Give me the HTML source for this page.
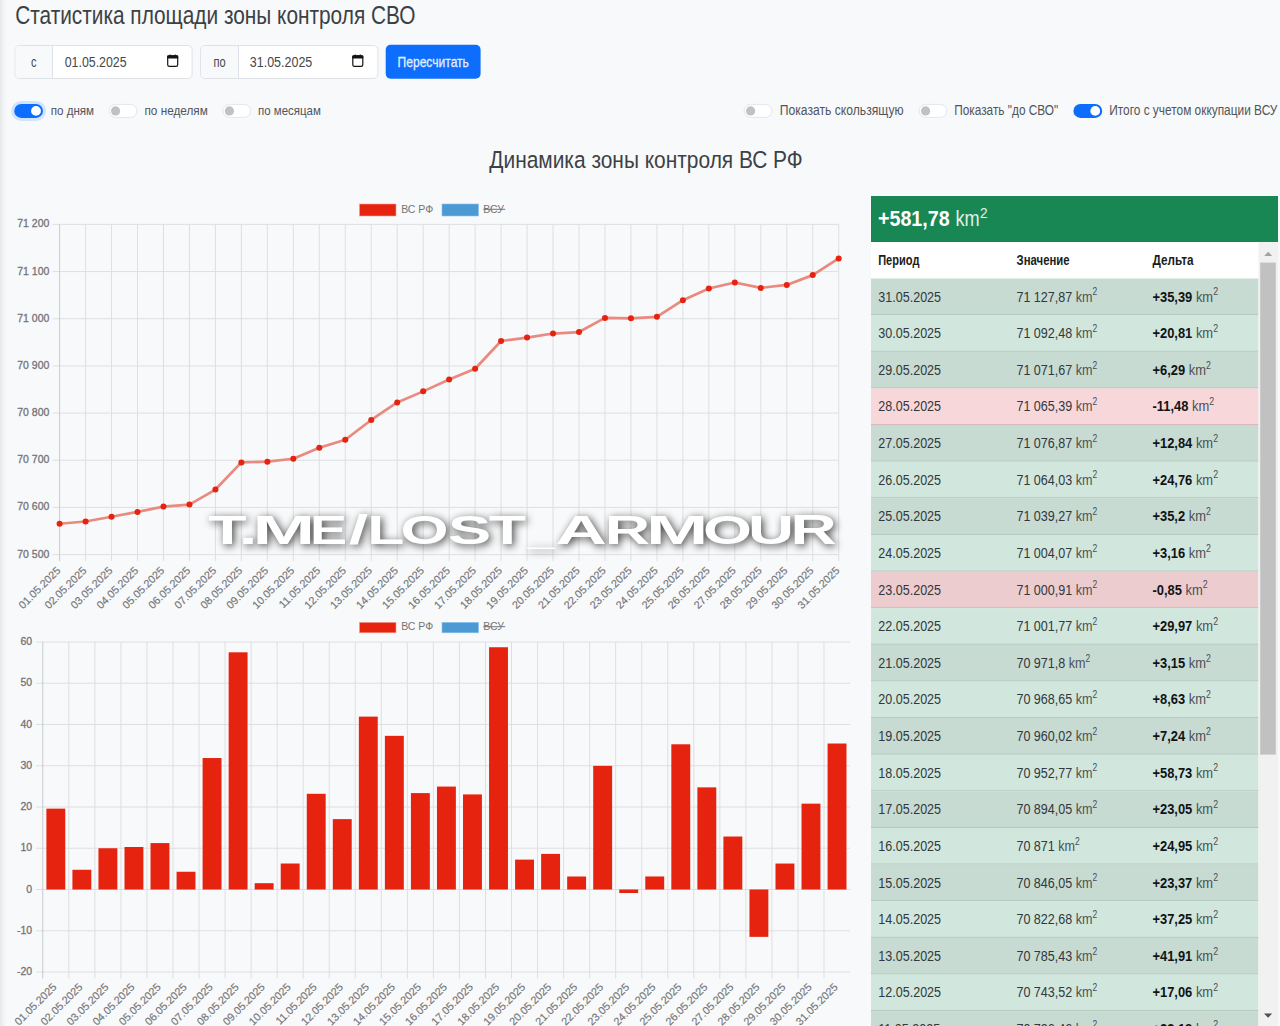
<!DOCTYPE html>
<html lang="ru"><head><meta charset="utf-8"><title>Статистика площади зоны контроля СВО</title>
<style>
html,body{margin:0;padding:0;background:#f8f9fa;}
body{width:1280px;height:1026px;overflow:hidden;font-family:"Liberation Sans", sans-serif;}
svg{display:block;font-family:"Liberation Sans", sans-serif;}
</style></head>
<body>
<svg width="1280" height="1026" viewBox="0 0 1280 1026">
<rect x="0.00" y="0.00" width="1280.00" height="1026.00" fill="#f8f9fa" />
<defs><linearGradient id="lstrip" x1="0" x2="1" y1="0" y2="0"><stop offset="0" stop-color="#e6e8ea"/><stop offset="1" stop-color="#f8f9fa" stop-opacity="0"/></linearGradient></defs>
<rect x="0.00" y="0.00" width="9.00" height="1026.00" fill="url(#lstrip)" />
<text x="15.20" y="23.75" font-size="25" fill="#3c4146" font-weight="normal" textLength="400.20" lengthAdjust="spacingAndGlyphs" >Статистика площади зоны контроля СВО</text>
<rect x="15.10" y="45.50" width="177.00" height="33.00" rx="4.5" fill="#ffffff" stroke="#dee2e6" stroke-width="1"/>
<path d="M52.50,46.00 L19.60,46.00 Q15.60,46.00 15.60,50.00 L15.60,74.00 Q15.60,78.00 19.60,78.00 L52.50,78.00 Z" fill="#f8f9fa"/>
<line x1="52.50" y1="45.50" x2="52.50" y2="78.50" stroke="#dee2e6" stroke-width="1" />
<text x="31.00" y="66.80" font-size="14" fill="#464b50" font-weight="normal" textLength="5.60" lengthAdjust="spacingAndGlyphs" >с</text>
<text x="64.70" y="66.80" font-size="15" fill="#43484d" font-weight="normal" textLength="61.90" lengthAdjust="spacingAndGlyphs" >01.05.2025</text>
<rect x="167.70" y="55.80" width="10.0" height="10.6" rx="1.7" fill="none" stroke="#141414" stroke-width="1.2"/><rect x="167.10" y="55.20" width="11.2" height="3.4" rx="1.2" fill="#141414"/><rect x="169.50" y="54.60" width="1.3" height="1.4" fill="#141414"/><rect x="174.60" y="54.60" width="1.3" height="1.4" fill="#141414"/>
<rect x="200.60" y="45.50" width="177.30" height="33.00" rx="4.5" fill="#ffffff" stroke="#dee2e6" stroke-width="1"/>
<path d="M238.50,46.00 L205.10,46.00 Q201.10,46.00 201.10,50.00 L201.10,74.00 Q201.10,78.00 205.10,78.00 L238.50,78.00 Z" fill="#f8f9fa"/>
<line x1="238.50" y1="45.50" x2="238.50" y2="78.50" stroke="#dee2e6" stroke-width="1" />
<text x="213.40" y="66.80" font-size="14" fill="#464b50" font-weight="normal" textLength="12.20" lengthAdjust="spacingAndGlyphs" >по</text>
<text x="249.80" y="66.80" font-size="15" fill="#43484d" font-weight="normal" textLength="62.50" lengthAdjust="spacingAndGlyphs" >31.05.2025</text>
<rect x="352.80" y="55.80" width="10.0" height="10.6" rx="1.7" fill="none" stroke="#141414" stroke-width="1.2"/><rect x="352.20" y="55.20" width="11.2" height="3.4" rx="1.2" fill="#141414"/><rect x="354.60" y="54.60" width="1.3" height="1.4" fill="#141414"/><rect x="359.70" y="54.60" width="1.3" height="1.4" fill="#141414"/>
<rect x="385.7" y="44.8" width="94.9" height="34" rx="5" fill="#0d6efd"/>
<text x="397.60" y="66.70" font-size="14.8" fill="#e4eeff" font-weight="normal" textLength="71.30" lengthAdjust="spacingAndGlyphs" stroke="#e4eeff" stroke-width="0.3">Пересчитать</text>
<rect x="11.20" y="100.90" width="34.80" height="20.00" rx="10.00" fill="#c4dcff" opacity="0.75"/>
<rect x="14.20" y="103.90" width="28.80" height="14.00" rx="7.00" fill="#0d6efd"/>
<circle cx="36.00" cy="110.90" r="4.9" fill="#ffffff"/>
<text x="50.70" y="114.60" font-size="13.3" fill="#50555a" font-weight="normal" textLength="43.40" lengthAdjust="spacingAndGlyphs" >по дням</text>
<rect x="109.10" y="104.40" width="27.80" height="13.00" rx="6.50" fill="#ffffff" stroke="#e3e6e9" stroke-width="1"/>
<circle cx="115.60" cy="110.90" r="4.6" fill="#c0c1c2"/>
<text x="144.50" y="114.60" font-size="13.3" fill="#50555a" font-weight="normal" textLength="63.30" lengthAdjust="spacingAndGlyphs" >по неделям</text>
<rect x="222.90" y="104.40" width="27.80" height="13.00" rx="6.50" fill="#ffffff" stroke="#e3e6e9" stroke-width="1"/>
<circle cx="229.40" cy="110.90" r="4.6" fill="#c0c1c2"/>
<text x="258.00" y="114.60" font-size="13.3" fill="#50555a" font-weight="normal" textLength="62.80" lengthAdjust="spacingAndGlyphs" >по месяцам</text>
<rect x="744.10" y="104.40" width="27.80" height="13.00" rx="6.50" fill="#ffffff" stroke="#e3e6e9" stroke-width="1"/>
<circle cx="750.60" cy="110.90" r="4.6" fill="#c0c1c2"/>
<text x="779.80" y="114.70" font-size="14" fill="#50555a" font-weight="normal" textLength="123.80" lengthAdjust="spacingAndGlyphs" >Показать скользящую</text>
<rect x="919.10" y="104.40" width="27.80" height="13.00" rx="6.50" fill="#ffffff" stroke="#e3e6e9" stroke-width="1"/>
<circle cx="925.60" cy="110.90" r="4.6" fill="#c0c1c2"/>
<text x="954.20" y="114.70" font-size="14" fill="#50555a" font-weight="normal" textLength="104.10" lengthAdjust="spacingAndGlyphs" >Показать "до СВО"</text>
<rect x="1073.40" y="103.90" width="28.80" height="14.00" rx="7.00" fill="#0d6efd"/>
<circle cx="1095.20" cy="110.90" r="4.9" fill="#ffffff"/>
<text x="1109.20" y="114.70" font-size="14" fill="#50555a" font-weight="normal" textLength="168.20" lengthAdjust="spacingAndGlyphs" >Итого с учетом оккупации ВСУ</text>
<text x="489.30" y="167.90" font-size="24.5" fill="#3c4146" font-weight="normal" textLength="313.40" lengthAdjust="spacingAndGlyphs" >Динамика зоны контроля ВС РФ</text>
<rect x="359.5" y="204.00" width="36.5" height="12.00" fill="#e5230f" stroke="#f0a090" stroke-width="0.6"/>
<text x="401.2" y="212.90" font-size="10.5" fill="#737578">ВС РФ</text>
<rect x="442" y="204.00" width="36.5" height="12.00" fill="#4c9ad3" stroke="#8cc0e8" stroke-width="0.6"/>
<text x="483.3" y="212.90" font-size="10.5" fill="#737578">ВСУ</text>
<line x1="483.30" y1="209.30" x2="505.20" y2="209.30" stroke="#737578" stroke-width="1" />
<line x1="52.50" y1="224.40" x2="838.70" y2="224.40" stroke="#dedfe1" stroke-width="1" />
<text x="49.4" y="227.40" text-anchor="end" font-size="10.5" fill="#737578" stroke="#737578" stroke-width="0.3">71 200</text>
<line x1="52.50" y1="271.57" x2="838.70" y2="271.57" stroke="#dedfe1" stroke-width="1" />
<text x="49.4" y="274.57" text-anchor="end" font-size="10.5" fill="#737578" stroke="#737578" stroke-width="0.3">71 100</text>
<line x1="52.50" y1="318.74" x2="838.70" y2="318.74" stroke="#dedfe1" stroke-width="1" />
<text x="49.4" y="321.74" text-anchor="end" font-size="10.5" fill="#737578" stroke="#737578" stroke-width="0.3">71 000</text>
<line x1="52.50" y1="365.91" x2="838.70" y2="365.91" stroke="#dedfe1" stroke-width="1" />
<text x="49.4" y="368.91" text-anchor="end" font-size="10.5" fill="#737578" stroke="#737578" stroke-width="0.3">70 900</text>
<line x1="52.50" y1="413.09" x2="838.70" y2="413.09" stroke="#dedfe1" stroke-width="1" />
<text x="49.4" y="416.09" text-anchor="end" font-size="10.5" fill="#737578" stroke="#737578" stroke-width="0.3">70 800</text>
<line x1="52.50" y1="460.26" x2="838.70" y2="460.26" stroke="#dedfe1" stroke-width="1" />
<text x="49.4" y="463.26" text-anchor="end" font-size="10.5" fill="#737578" stroke="#737578" stroke-width="0.3">70 700</text>
<line x1="52.50" y1="507.43" x2="838.70" y2="507.43" stroke="#dedfe1" stroke-width="1" />
<text x="49.4" y="510.43" text-anchor="end" font-size="10.5" fill="#737578" stroke="#737578" stroke-width="0.3">70 600</text>
<line x1="52.50" y1="554.60" x2="838.70" y2="554.60" stroke="#dedfe1" stroke-width="1" />
<text x="49.4" y="557.60" text-anchor="end" font-size="10.5" fill="#737578" stroke="#737578" stroke-width="0.3">70 500</text>
<line x1="59.60" y1="224.40" x2="59.60" y2="561.10" stroke="#c9cacc" stroke-width="1" />
<line x1="85.57" y1="224.40" x2="85.57" y2="561.10" stroke="#dedfe1" stroke-width="1" />
<line x1="111.54" y1="224.40" x2="111.54" y2="561.10" stroke="#dedfe1" stroke-width="1" />
<line x1="137.51" y1="224.40" x2="137.51" y2="561.10" stroke="#dedfe1" stroke-width="1" />
<line x1="163.48" y1="224.40" x2="163.48" y2="561.10" stroke="#dedfe1" stroke-width="1" />
<line x1="189.45" y1="224.40" x2="189.45" y2="561.10" stroke="#dedfe1" stroke-width="1" />
<line x1="215.42" y1="224.40" x2="215.42" y2="561.10" stroke="#dedfe1" stroke-width="1" />
<line x1="241.39" y1="224.40" x2="241.39" y2="561.10" stroke="#dedfe1" stroke-width="1" />
<line x1="267.36" y1="224.40" x2="267.36" y2="561.10" stroke="#dedfe1" stroke-width="1" />
<line x1="293.33" y1="224.40" x2="293.33" y2="561.10" stroke="#dedfe1" stroke-width="1" />
<line x1="319.30" y1="224.40" x2="319.30" y2="561.10" stroke="#dedfe1" stroke-width="1" />
<line x1="345.27" y1="224.40" x2="345.27" y2="561.10" stroke="#dedfe1" stroke-width="1" />
<line x1="371.24" y1="224.40" x2="371.24" y2="561.10" stroke="#dedfe1" stroke-width="1" />
<line x1="397.21" y1="224.40" x2="397.21" y2="561.10" stroke="#dedfe1" stroke-width="1" />
<line x1="423.18" y1="224.40" x2="423.18" y2="561.10" stroke="#dedfe1" stroke-width="1" />
<line x1="449.15" y1="224.40" x2="449.15" y2="561.10" stroke="#dedfe1" stroke-width="1" />
<line x1="475.12" y1="224.40" x2="475.12" y2="561.10" stroke="#dedfe1" stroke-width="1" />
<line x1="501.09" y1="224.40" x2="501.09" y2="561.10" stroke="#dedfe1" stroke-width="1" />
<line x1="527.06" y1="224.40" x2="527.06" y2="561.10" stroke="#dedfe1" stroke-width="1" />
<line x1="553.03" y1="224.40" x2="553.03" y2="561.10" stroke="#dedfe1" stroke-width="1" />
<line x1="579.00" y1="224.40" x2="579.00" y2="561.10" stroke="#dedfe1" stroke-width="1" />
<line x1="604.97" y1="224.40" x2="604.97" y2="561.10" stroke="#dedfe1" stroke-width="1" />
<line x1="630.94" y1="224.40" x2="630.94" y2="561.10" stroke="#dedfe1" stroke-width="1" />
<line x1="656.91" y1="224.40" x2="656.91" y2="561.10" stroke="#dedfe1" stroke-width="1" />
<line x1="682.88" y1="224.40" x2="682.88" y2="561.10" stroke="#dedfe1" stroke-width="1" />
<line x1="708.85" y1="224.40" x2="708.85" y2="561.10" stroke="#dedfe1" stroke-width="1" />
<line x1="734.82" y1="224.40" x2="734.82" y2="561.10" stroke="#dedfe1" stroke-width="1" />
<line x1="760.79" y1="224.40" x2="760.79" y2="561.10" stroke="#dedfe1" stroke-width="1" />
<line x1="786.76" y1="224.40" x2="786.76" y2="561.10" stroke="#dedfe1" stroke-width="1" />
<line x1="812.73" y1="224.40" x2="812.73" y2="561.10" stroke="#dedfe1" stroke-width="1" />
<line x1="838.70" y1="224.40" x2="838.70" y2="561.10" stroke="#dedfe1" stroke-width="1" />
<text transform="translate(61.20,571.20) rotate(-45)" text-anchor="end" font-size="10.8" fill="#737578" stroke="#737578" stroke-width="0.15">01.05.2025</text>
<text transform="translate(87.17,571.20) rotate(-45)" text-anchor="end" font-size="10.8" fill="#737578" stroke="#737578" stroke-width="0.15">02.05.2025</text>
<text transform="translate(113.14,571.20) rotate(-45)" text-anchor="end" font-size="10.8" fill="#737578" stroke="#737578" stroke-width="0.15">03.05.2025</text>
<text transform="translate(139.11,571.20) rotate(-45)" text-anchor="end" font-size="10.8" fill="#737578" stroke="#737578" stroke-width="0.15">04.05.2025</text>
<text transform="translate(165.08,571.20) rotate(-45)" text-anchor="end" font-size="10.8" fill="#737578" stroke="#737578" stroke-width="0.15">05.05.2025</text>
<text transform="translate(191.05,571.20) rotate(-45)" text-anchor="end" font-size="10.8" fill="#737578" stroke="#737578" stroke-width="0.15">06.05.2025</text>
<text transform="translate(217.02,571.20) rotate(-45)" text-anchor="end" font-size="10.8" fill="#737578" stroke="#737578" stroke-width="0.15">07.05.2025</text>
<text transform="translate(242.99,571.20) rotate(-45)" text-anchor="end" font-size="10.8" fill="#737578" stroke="#737578" stroke-width="0.15">08.05.2025</text>
<text transform="translate(268.96,571.20) rotate(-45)" text-anchor="end" font-size="10.8" fill="#737578" stroke="#737578" stroke-width="0.15">09.05.2025</text>
<text transform="translate(294.93,571.20) rotate(-45)" text-anchor="end" font-size="10.8" fill="#737578" stroke="#737578" stroke-width="0.15">10.05.2025</text>
<text transform="translate(320.90,571.20) rotate(-45)" text-anchor="end" font-size="10.8" fill="#737578" stroke="#737578" stroke-width="0.15">11.05.2025</text>
<text transform="translate(346.87,571.20) rotate(-45)" text-anchor="end" font-size="10.8" fill="#737578" stroke="#737578" stroke-width="0.15">12.05.2025</text>
<text transform="translate(372.84,571.20) rotate(-45)" text-anchor="end" font-size="10.8" fill="#737578" stroke="#737578" stroke-width="0.15">13.05.2025</text>
<text transform="translate(398.81,571.20) rotate(-45)" text-anchor="end" font-size="10.8" fill="#737578" stroke="#737578" stroke-width="0.15">14.05.2025</text>
<text transform="translate(424.78,571.20) rotate(-45)" text-anchor="end" font-size="10.8" fill="#737578" stroke="#737578" stroke-width="0.15">15.05.2025</text>
<text transform="translate(450.75,571.20) rotate(-45)" text-anchor="end" font-size="10.8" fill="#737578" stroke="#737578" stroke-width="0.15">16.05.2025</text>
<text transform="translate(476.72,571.20) rotate(-45)" text-anchor="end" font-size="10.8" fill="#737578" stroke="#737578" stroke-width="0.15">17.05.2025</text>
<text transform="translate(502.69,571.20) rotate(-45)" text-anchor="end" font-size="10.8" fill="#737578" stroke="#737578" stroke-width="0.15">18.05.2025</text>
<text transform="translate(528.66,571.20) rotate(-45)" text-anchor="end" font-size="10.8" fill="#737578" stroke="#737578" stroke-width="0.15">19.05.2025</text>
<text transform="translate(554.63,571.20) rotate(-45)" text-anchor="end" font-size="10.8" fill="#737578" stroke="#737578" stroke-width="0.15">20.05.2025</text>
<text transform="translate(580.60,571.20) rotate(-45)" text-anchor="end" font-size="10.8" fill="#737578" stroke="#737578" stroke-width="0.15">21.05.2025</text>
<text transform="translate(606.57,571.20) rotate(-45)" text-anchor="end" font-size="10.8" fill="#737578" stroke="#737578" stroke-width="0.15">22.05.2025</text>
<text transform="translate(632.54,571.20) rotate(-45)" text-anchor="end" font-size="10.8" fill="#737578" stroke="#737578" stroke-width="0.15">23.05.2025</text>
<text transform="translate(658.51,571.20) rotate(-45)" text-anchor="end" font-size="10.8" fill="#737578" stroke="#737578" stroke-width="0.15">24.05.2025</text>
<text transform="translate(684.48,571.20) rotate(-45)" text-anchor="end" font-size="10.8" fill="#737578" stroke="#737578" stroke-width="0.15">25.05.2025</text>
<text transform="translate(710.45,571.20) rotate(-45)" text-anchor="end" font-size="10.8" fill="#737578" stroke="#737578" stroke-width="0.15">26.05.2025</text>
<text transform="translate(736.42,571.20) rotate(-45)" text-anchor="end" font-size="10.8" fill="#737578" stroke="#737578" stroke-width="0.15">27.05.2025</text>
<text transform="translate(762.39,571.20) rotate(-45)" text-anchor="end" font-size="10.8" fill="#737578" stroke="#737578" stroke-width="0.15">28.05.2025</text>
<text transform="translate(788.36,571.20) rotate(-45)" text-anchor="end" font-size="10.8" fill="#737578" stroke="#737578" stroke-width="0.15">29.05.2025</text>
<text transform="translate(814.33,571.20) rotate(-45)" text-anchor="end" font-size="10.8" fill="#737578" stroke="#737578" stroke-width="0.15">30.05.2025</text>
<text transform="translate(840.30,571.20) rotate(-45)" text-anchor="end" font-size="10.8" fill="#737578" stroke="#737578" stroke-width="0.15">31.05.2025</text>
<polyline fill="none" stroke="#ea897f" stroke-width="2.7" stroke-linejoin="round" points="59.60,523.75 85.57,521.49 111.54,516.77 137.51,511.91 163.48,506.61 189.45,504.58 215.42,489.55 241.39,462.42 267.36,461.70 293.33,458.73 319.30,447.79 345.27,439.74 371.24,419.97 397.21,402.40 423.18,391.37 449.15,379.60 475.12,368.73 501.09,341.03 527.06,337.61 553.03,333.54 579.00,332.05 604.97,317.92 630.94,318.32 656.91,316.83 682.88,300.22 708.85,288.54 734.82,282.49 760.79,287.90 786.76,284.94 812.73,275.12 838.70,258.42"/>
<circle cx="59.60" cy="523.75" r="3" fill="#e5230f"/>
<circle cx="85.57" cy="521.49" r="3" fill="#e5230f"/>
<circle cx="111.54" cy="516.77" r="3" fill="#e5230f"/>
<circle cx="137.51" cy="511.91" r="3" fill="#e5230f"/>
<circle cx="163.48" cy="506.61" r="3" fill="#e5230f"/>
<circle cx="189.45" cy="504.58" r="3" fill="#e5230f"/>
<circle cx="215.42" cy="489.55" r="3" fill="#e5230f"/>
<circle cx="241.39" cy="462.42" r="3" fill="#e5230f"/>
<circle cx="267.36" cy="461.70" r="3" fill="#e5230f"/>
<circle cx="293.33" cy="458.73" r="3" fill="#e5230f"/>
<circle cx="319.30" cy="447.79" r="3" fill="#e5230f"/>
<circle cx="345.27" cy="439.74" r="3" fill="#e5230f"/>
<circle cx="371.24" cy="419.97" r="3" fill="#e5230f"/>
<circle cx="397.21" cy="402.40" r="3" fill="#e5230f"/>
<circle cx="423.18" cy="391.37" r="3" fill="#e5230f"/>
<circle cx="449.15" cy="379.60" r="3" fill="#e5230f"/>
<circle cx="475.12" cy="368.73" r="3" fill="#e5230f"/>
<circle cx="501.09" cy="341.03" r="3" fill="#e5230f"/>
<circle cx="527.06" cy="337.61" r="3" fill="#e5230f"/>
<circle cx="553.03" cy="333.54" r="3" fill="#e5230f"/>
<circle cx="579.00" cy="332.05" r="3" fill="#e5230f"/>
<circle cx="604.97" cy="317.92" r="3" fill="#e5230f"/>
<circle cx="630.94" cy="318.32" r="3" fill="#e5230f"/>
<circle cx="656.91" cy="316.83" r="3" fill="#e5230f"/>
<circle cx="682.88" cy="300.22" r="3" fill="#e5230f"/>
<circle cx="708.85" cy="288.54" r="3" fill="#e5230f"/>
<circle cx="734.82" cy="282.49" r="3" fill="#e5230f"/>
<circle cx="760.79" cy="287.90" r="3" fill="#e5230f"/>
<circle cx="786.76" cy="284.94" r="3" fill="#e5230f"/>
<circle cx="812.73" cy="275.12" r="3" fill="#e5230f"/>
<circle cx="838.70" cy="258.42" r="3" fill="#e5230f"/>
<rect x="359.5" y="622.40" width="36.5" height="10.40" fill="#e5230f" stroke="#f0a090" stroke-width="0.6"/>
<text x="401.2" y="630.30" font-size="10.5" fill="#737578">ВС РФ</text>
<rect x="442" y="622.40" width="36.5" height="10.40" fill="#4c9ad3" stroke="#8cc0e8" stroke-width="0.6"/>
<text x="483.3" y="630.30" font-size="10.5" fill="#737578">ВСУ</text>
<line x1="483.30" y1="626.70" x2="505.20" y2="626.70" stroke="#737578" stroke-width="1" />
<line x1="36.00" y1="642.00" x2="850.04" y2="642.00" stroke="#dedfe1" stroke-width="1" />
<text x="32.2" y="645.00" text-anchor="end" font-size="10.5" fill="#737578" stroke="#737578" stroke-width="0.3">60</text>
<line x1="36.00" y1="683.25" x2="850.04" y2="683.25" stroke="#dedfe1" stroke-width="1" />
<text x="32.2" y="686.25" text-anchor="end" font-size="10.5" fill="#737578" stroke="#737578" stroke-width="0.3">50</text>
<line x1="36.00" y1="724.50" x2="850.04" y2="724.50" stroke="#dedfe1" stroke-width="1" />
<text x="32.2" y="727.50" text-anchor="end" font-size="10.5" fill="#737578" stroke="#737578" stroke-width="0.3">40</text>
<line x1="36.00" y1="765.75" x2="850.04" y2="765.75" stroke="#dedfe1" stroke-width="1" />
<text x="32.2" y="768.75" text-anchor="end" font-size="10.5" fill="#737578" stroke="#737578" stroke-width="0.3">30</text>
<line x1="36.00" y1="807.00" x2="850.04" y2="807.00" stroke="#dedfe1" stroke-width="1" />
<text x="32.2" y="810.00" text-anchor="end" font-size="10.5" fill="#737578" stroke="#737578" stroke-width="0.3">20</text>
<line x1="36.00" y1="848.25" x2="850.04" y2="848.25" stroke="#dedfe1" stroke-width="1" />
<text x="32.2" y="851.25" text-anchor="end" font-size="10.5" fill="#737578" stroke="#737578" stroke-width="0.3">10</text>
<line x1="36.00" y1="889.50" x2="850.04" y2="889.50" stroke="#dedfe1" stroke-width="1" />
<text x="32.2" y="892.50" text-anchor="end" font-size="10.5" fill="#737578" stroke="#737578" stroke-width="0.3">0</text>
<line x1="36.00" y1="930.75" x2="850.04" y2="930.75" stroke="#dedfe1" stroke-width="1" />
<text x="32.2" y="933.75" text-anchor="end" font-size="10.5" fill="#737578" stroke="#737578" stroke-width="0.3">-10</text>
<line x1="36.00" y1="972.00" x2="850.04" y2="972.00" stroke="#dedfe1" stroke-width="1" />
<text x="32.2" y="975.00" text-anchor="end" font-size="10.5" fill="#737578" stroke="#737578" stroke-width="0.3">-20</text>
<line x1="42.80" y1="642.00" x2="42.80" y2="978.50" stroke="#c9cacc" stroke-width="1" />
<line x1="68.84" y1="642.00" x2="68.84" y2="978.50" stroke="#dedfe1" stroke-width="1" />
<line x1="94.88" y1="642.00" x2="94.88" y2="978.50" stroke="#dedfe1" stroke-width="1" />
<line x1="120.92" y1="642.00" x2="120.92" y2="978.50" stroke="#dedfe1" stroke-width="1" />
<line x1="146.96" y1="642.00" x2="146.96" y2="978.50" stroke="#dedfe1" stroke-width="1" />
<line x1="173.00" y1="642.00" x2="173.00" y2="978.50" stroke="#dedfe1" stroke-width="1" />
<line x1="199.04" y1="642.00" x2="199.04" y2="978.50" stroke="#dedfe1" stroke-width="1" />
<line x1="225.08" y1="642.00" x2="225.08" y2="978.50" stroke="#dedfe1" stroke-width="1" />
<line x1="251.12" y1="642.00" x2="251.12" y2="978.50" stroke="#dedfe1" stroke-width="1" />
<line x1="277.16" y1="642.00" x2="277.16" y2="978.50" stroke="#dedfe1" stroke-width="1" />
<line x1="303.20" y1="642.00" x2="303.20" y2="978.50" stroke="#dedfe1" stroke-width="1" />
<line x1="329.24" y1="642.00" x2="329.24" y2="978.50" stroke="#dedfe1" stroke-width="1" />
<line x1="355.28" y1="642.00" x2="355.28" y2="978.50" stroke="#dedfe1" stroke-width="1" />
<line x1="381.32" y1="642.00" x2="381.32" y2="978.50" stroke="#dedfe1" stroke-width="1" />
<line x1="407.36" y1="642.00" x2="407.36" y2="978.50" stroke="#dedfe1" stroke-width="1" />
<line x1="433.40" y1="642.00" x2="433.40" y2="978.50" stroke="#dedfe1" stroke-width="1" />
<line x1="459.44" y1="642.00" x2="459.44" y2="978.50" stroke="#dedfe1" stroke-width="1" />
<line x1="485.48" y1="642.00" x2="485.48" y2="978.50" stroke="#dedfe1" stroke-width="1" />
<line x1="511.52" y1="642.00" x2="511.52" y2="978.50" stroke="#dedfe1" stroke-width="1" />
<line x1="537.56" y1="642.00" x2="537.56" y2="978.50" stroke="#dedfe1" stroke-width="1" />
<line x1="563.60" y1="642.00" x2="563.60" y2="978.50" stroke="#dedfe1" stroke-width="1" />
<line x1="589.64" y1="642.00" x2="589.64" y2="978.50" stroke="#dedfe1" stroke-width="1" />
<line x1="615.68" y1="642.00" x2="615.68" y2="978.50" stroke="#dedfe1" stroke-width="1" />
<line x1="641.72" y1="642.00" x2="641.72" y2="978.50" stroke="#dedfe1" stroke-width="1" />
<line x1="667.76" y1="642.00" x2="667.76" y2="978.50" stroke="#dedfe1" stroke-width="1" />
<line x1="693.80" y1="642.00" x2="693.80" y2="978.50" stroke="#dedfe1" stroke-width="1" />
<line x1="719.84" y1="642.00" x2="719.84" y2="978.50" stroke="#dedfe1" stroke-width="1" />
<line x1="745.88" y1="642.00" x2="745.88" y2="978.50" stroke="#dedfe1" stroke-width="1" />
<line x1="771.92" y1="642.00" x2="771.92" y2="978.50" stroke="#dedfe1" stroke-width="1" />
<line x1="797.96" y1="642.00" x2="797.96" y2="978.50" stroke="#dedfe1" stroke-width="1" />
<line x1="824.00" y1="642.00" x2="824.00" y2="978.50" stroke="#dedfe1" stroke-width="1" />
<rect x="46.37" y="808.65" width="18.90" height="80.85" fill="#e5230f" />
<rect x="72.41" y="869.78" width="18.90" height="19.72" fill="#e5230f" />
<rect x="98.45" y="848.25" width="18.90" height="41.25" fill="#e5230f" />
<rect x="124.49" y="847.01" width="18.90" height="42.49" fill="#e5230f" />
<rect x="150.53" y="843.09" width="18.90" height="46.41" fill="#e5230f" />
<rect x="176.57" y="871.76" width="18.90" height="17.74" fill="#e5230f" />
<rect x="202.61" y="758.04" width="18.90" height="131.46" fill="#e5230f" />
<rect x="228.65" y="652.31" width="18.90" height="237.19" fill="#e5230f" />
<rect x="254.69" y="883.19" width="18.90" height="6.31" fill="#e5230f" />
<rect x="280.73" y="863.51" width="18.90" height="25.99" fill="#e5230f" />
<rect x="306.77" y="793.80" width="18.90" height="95.70" fill="#e5230f" />
<rect x="332.81" y="819.13" width="18.90" height="70.37" fill="#e5230f" />
<rect x="358.85" y="716.62" width="18.90" height="172.88" fill="#e5230f" />
<rect x="384.89" y="735.84" width="18.90" height="153.66" fill="#e5230f" />
<rect x="410.93" y="793.10" width="18.90" height="96.40" fill="#e5230f" />
<rect x="436.97" y="786.58" width="18.90" height="102.92" fill="#e5230f" />
<rect x="463.01" y="794.42" width="18.90" height="95.08" fill="#e5230f" />
<rect x="489.05" y="647.24" width="18.90" height="242.26" fill="#e5230f" />
<rect x="515.09" y="859.63" width="18.90" height="29.87" fill="#e5230f" />
<rect x="541.13" y="853.90" width="18.90" height="35.60" fill="#e5230f" />
<rect x="567.17" y="876.51" width="18.90" height="12.99" fill="#e5230f" />
<rect x="593.21" y="765.87" width="18.90" height="123.63" fill="#e5230f" />
<rect x="619.25" y="889.50" width="18.90" height="3.51" fill="#e5230f" />
<rect x="645.29" y="876.47" width="18.90" height="13.03" fill="#e5230f" />
<rect x="671.33" y="744.30" width="18.90" height="145.20" fill="#e5230f" />
<rect x="697.37" y="787.37" width="18.90" height="102.13" fill="#e5230f" />
<rect x="723.41" y="836.53" width="18.90" height="52.97" fill="#e5230f" />
<rect x="749.45" y="889.50" width="18.90" height="47.36" fill="#e5230f" />
<rect x="775.49" y="863.55" width="18.90" height="25.95" fill="#e5230f" />
<rect x="801.53" y="803.66" width="18.90" height="85.84" fill="#e5230f" />
<rect x="827.57" y="743.52" width="18.90" height="145.98" fill="#e5230f" />
<text transform="translate(57.22,987.70) rotate(-45)" text-anchor="end" font-size="10.8" fill="#737578" stroke="#737578" stroke-width="0.15">01.05.2025</text>
<text transform="translate(83.26,987.70) rotate(-45)" text-anchor="end" font-size="10.8" fill="#737578" stroke="#737578" stroke-width="0.15">02.05.2025</text>
<text transform="translate(109.30,987.70) rotate(-45)" text-anchor="end" font-size="10.8" fill="#737578" stroke="#737578" stroke-width="0.15">03.05.2025</text>
<text transform="translate(135.34,987.70) rotate(-45)" text-anchor="end" font-size="10.8" fill="#737578" stroke="#737578" stroke-width="0.15">04.05.2025</text>
<text transform="translate(161.38,987.70) rotate(-45)" text-anchor="end" font-size="10.8" fill="#737578" stroke="#737578" stroke-width="0.15">05.05.2025</text>
<text transform="translate(187.42,987.70) rotate(-45)" text-anchor="end" font-size="10.8" fill="#737578" stroke="#737578" stroke-width="0.15">06.05.2025</text>
<text transform="translate(213.46,987.70) rotate(-45)" text-anchor="end" font-size="10.8" fill="#737578" stroke="#737578" stroke-width="0.15">07.05.2025</text>
<text transform="translate(239.50,987.70) rotate(-45)" text-anchor="end" font-size="10.8" fill="#737578" stroke="#737578" stroke-width="0.15">08.05.2025</text>
<text transform="translate(265.54,987.70) rotate(-45)" text-anchor="end" font-size="10.8" fill="#737578" stroke="#737578" stroke-width="0.15">09.05.2025</text>
<text transform="translate(291.58,987.70) rotate(-45)" text-anchor="end" font-size="10.8" fill="#737578" stroke="#737578" stroke-width="0.15">10.05.2025</text>
<text transform="translate(317.62,987.70) rotate(-45)" text-anchor="end" font-size="10.8" fill="#737578" stroke="#737578" stroke-width="0.15">11.05.2025</text>
<text transform="translate(343.66,987.70) rotate(-45)" text-anchor="end" font-size="10.8" fill="#737578" stroke="#737578" stroke-width="0.15">12.05.2025</text>
<text transform="translate(369.70,987.70) rotate(-45)" text-anchor="end" font-size="10.8" fill="#737578" stroke="#737578" stroke-width="0.15">13.05.2025</text>
<text transform="translate(395.74,987.70) rotate(-45)" text-anchor="end" font-size="10.8" fill="#737578" stroke="#737578" stroke-width="0.15">14.05.2025</text>
<text transform="translate(421.78,987.70) rotate(-45)" text-anchor="end" font-size="10.8" fill="#737578" stroke="#737578" stroke-width="0.15">15.05.2025</text>
<text transform="translate(447.82,987.70) rotate(-45)" text-anchor="end" font-size="10.8" fill="#737578" stroke="#737578" stroke-width="0.15">16.05.2025</text>
<text transform="translate(473.86,987.70) rotate(-45)" text-anchor="end" font-size="10.8" fill="#737578" stroke="#737578" stroke-width="0.15">17.05.2025</text>
<text transform="translate(499.90,987.70) rotate(-45)" text-anchor="end" font-size="10.8" fill="#737578" stroke="#737578" stroke-width="0.15">18.05.2025</text>
<text transform="translate(525.94,987.70) rotate(-45)" text-anchor="end" font-size="10.8" fill="#737578" stroke="#737578" stroke-width="0.15">19.05.2025</text>
<text transform="translate(551.98,987.70) rotate(-45)" text-anchor="end" font-size="10.8" fill="#737578" stroke="#737578" stroke-width="0.15">20.05.2025</text>
<text transform="translate(578.02,987.70) rotate(-45)" text-anchor="end" font-size="10.8" fill="#737578" stroke="#737578" stroke-width="0.15">21.05.2025</text>
<text transform="translate(604.06,987.70) rotate(-45)" text-anchor="end" font-size="10.8" fill="#737578" stroke="#737578" stroke-width="0.15">22.05.2025</text>
<text transform="translate(630.10,987.70) rotate(-45)" text-anchor="end" font-size="10.8" fill="#737578" stroke="#737578" stroke-width="0.15">23.05.2025</text>
<text transform="translate(656.14,987.70) rotate(-45)" text-anchor="end" font-size="10.8" fill="#737578" stroke="#737578" stroke-width="0.15">24.05.2025</text>
<text transform="translate(682.18,987.70) rotate(-45)" text-anchor="end" font-size="10.8" fill="#737578" stroke="#737578" stroke-width="0.15">25.05.2025</text>
<text transform="translate(708.22,987.70) rotate(-45)" text-anchor="end" font-size="10.8" fill="#737578" stroke="#737578" stroke-width="0.15">26.05.2025</text>
<text transform="translate(734.26,987.70) rotate(-45)" text-anchor="end" font-size="10.8" fill="#737578" stroke="#737578" stroke-width="0.15">27.05.2025</text>
<text transform="translate(760.30,987.70) rotate(-45)" text-anchor="end" font-size="10.8" fill="#737578" stroke="#737578" stroke-width="0.15">28.05.2025</text>
<text transform="translate(786.34,987.70) rotate(-45)" text-anchor="end" font-size="10.8" fill="#737578" stroke="#737578" stroke-width="0.15">29.05.2025</text>
<text transform="translate(812.38,987.70) rotate(-45)" text-anchor="end" font-size="10.8" fill="#737578" stroke="#737578" stroke-width="0.15">30.05.2025</text>
<text transform="translate(838.42,987.70) rotate(-45)" text-anchor="end" font-size="10.8" fill="#737578" stroke="#737578" stroke-width="0.15">31.05.2025</text>
<defs><filter id="wmblur" x="-10%" y="-60%" width="120%" height="220%"><feGaussianBlur stdDeviation="4.5"/></filter></defs>
<g transform="translate(2,2.5)" opacity="0.75" filter="url(#wmblur)"><g fill="#000" font-weight="bold" ><text transform="translate(208.31,543.6) scale(1.511,1)" font-size="41.57">T</text><text transform="translate(238.67,543.6) scale(1.604,1)" font-size="41.57">.</text><text transform="translate(252.47,543.6) scale(1.807,1)" font-size="41.57">M</text><text transform="translate(310.07,543.6) scale(1.338,1)" font-size="41.57">E</text><text transform="translate(348.80,543.6) scale(1.678,1)" font-size="41.57">/</text><text transform="translate(367.23,543.6) scale(1.463,1)" font-size="41.57">L</text><text transform="translate(400.46,543.6) scale(1.488,1)" font-size="41.57">O</text><text transform="translate(448.12,543.6) scale(1.558,1)" font-size="41.57">S</text><text transform="translate(488.73,543.6) scale(1.466,1)" font-size="41.57">T</text><text transform="translate(527.39,543.6) scale(1.176,1)" font-size="41.57">_</text><text transform="translate(555.52,543.6) scale(1.710,1)" font-size="41.57">A</text><text transform="translate(604.68,543.6) scale(1.514,1)" font-size="41.57">R</text><text transform="translate(645.99,543.6) scale(1.800,1)" font-size="41.57">M</text><text transform="translate(703.02,543.6) scale(1.516,1)" font-size="41.57">O</text><text transform="translate(747.88,543.6) scale(1.533,1)" font-size="41.57">U</text><text transform="translate(790.41,543.6) scale(1.540,1)" font-size="41.57">R</text></g></g>
<g fill="#ffffff" font-weight="bold" ><text transform="translate(208.31,543.6) scale(1.511,1)" font-size="41.57">T</text><text transform="translate(238.67,543.6) scale(1.604,1)" font-size="41.57">.</text><text transform="translate(252.47,543.6) scale(1.807,1)" font-size="41.57">M</text><text transform="translate(310.07,543.6) scale(1.338,1)" font-size="41.57">E</text><text transform="translate(348.80,543.6) scale(1.678,1)" font-size="41.57">/</text><text transform="translate(367.23,543.6) scale(1.463,1)" font-size="41.57">L</text><text transform="translate(400.46,543.6) scale(1.488,1)" font-size="41.57">O</text><text transform="translate(448.12,543.6) scale(1.558,1)" font-size="41.57">S</text><text transform="translate(488.73,543.6) scale(1.466,1)" font-size="41.57">T</text><text transform="translate(527.39,543.6) scale(1.176,1)" font-size="41.57">_</text><text transform="translate(555.52,543.6) scale(1.710,1)" font-size="41.57">A</text><text transform="translate(604.68,543.6) scale(1.514,1)" font-size="41.57">R</text><text transform="translate(645.99,543.6) scale(1.800,1)" font-size="41.57">M</text><text transform="translate(703.02,543.6) scale(1.516,1)" font-size="41.57">O</text><text transform="translate(747.88,543.6) scale(1.533,1)" font-size="41.57">U</text><text transform="translate(790.41,543.6) scale(1.540,1)" font-size="41.57">R</text></g>
<rect x="871.00" y="196.00" width="407.00" height="46.00" fill="#198754" />
<text x="878.00" y="226.40" font-size="22" fill="#ffffff" font-weight="bold" textLength="71.60" lengthAdjust="spacingAndGlyphs" >+581,78</text>
<text x="955.40" y="226.40" font-size="22" fill="#e3efe7" font-weight="normal" textLength="24.20" lengthAdjust="spacingAndGlyphs" >km</text>
<text x="980.00" y="217.60" font-size="15" fill="#e3efe7" font-weight="normal" textLength="7.60" lengthAdjust="spacingAndGlyphs" >2</text>
<rect x="871.00" y="242.00" width="387.50" height="36.50" fill="#ffffff" />
<text x="878.20" y="264.6" font-size="15" font-weight="bold" fill="#1a1d20" textLength="41.20" lengthAdjust="spacingAndGlyphs">Период</text>
<text x="1016.60" y="264.6" font-size="15" font-weight="bold" fill="#1a1d20" textLength="53.00" lengthAdjust="spacingAndGlyphs">Значение</text>
<text x="1152.50" y="264.6" font-size="15" font-weight="bold" fill="#1a1d20" textLength="41.00" lengthAdjust="spacingAndGlyphs">Дельта</text>
<g>
<rect x="871.00" y="278.50" width="387.50" height="36.63" fill="#c7dbd2" />
<rect x="871.00" y="314.13" width="387.50" height="1.00" fill="#b3c7bd" />
<text transform="translate(878.2,301.50) scale(0.811,1)" font-size="15.5" fill="#33383c">31.05.2025</text>
<text transform="translate(1016.4,301.50) scale(0.811,1)" font-size="15.5" fill="#33383c">71 127,87 <tspan fill="#4a4f54">km</tspan><tspan font-size="10.5" dy="-6.2" fill="#4a4f54">2</tspan></text>
<text transform="translate(1152.4,301.50) scale(0.835,1)" font-size="15.5" fill="#4a4f54"><tspan font-weight="bold" fill="#111417">+35,39</tspan> km<tspan font-size="10.5" dy="-6.2">2</tspan></text>
<rect x="871.00" y="315.13" width="387.50" height="36.63" fill="#d1e7dd" />
<rect x="871.00" y="350.76" width="387.50" height="1.00" fill="#b3c7bd" />
<text transform="translate(878.2,338.13) scale(0.811,1)" font-size="15.5" fill="#33383c">30.05.2025</text>
<text transform="translate(1016.4,338.13) scale(0.811,1)" font-size="15.5" fill="#33383c">71 092,48 <tspan fill="#4a4f54">km</tspan><tspan font-size="10.5" dy="-6.2" fill="#4a4f54">2</tspan></text>
<text transform="translate(1152.4,338.13) scale(0.835,1)" font-size="15.5" fill="#4a4f54"><tspan font-weight="bold" fill="#111417">+20,81</tspan> km<tspan font-size="10.5" dy="-6.2">2</tspan></text>
<rect x="871.00" y="351.76" width="387.50" height="36.63" fill="#c7dbd2" />
<rect x="871.00" y="387.39" width="387.50" height="1.00" fill="#b3c7bd" />
<text transform="translate(878.2,374.76) scale(0.811,1)" font-size="15.5" fill="#33383c">29.05.2025</text>
<text transform="translate(1016.4,374.76) scale(0.811,1)" font-size="15.5" fill="#33383c">71 071,67 <tspan fill="#4a4f54">km</tspan><tspan font-size="10.5" dy="-6.2" fill="#4a4f54">2</tspan></text>
<text transform="translate(1152.4,374.76) scale(0.835,1)" font-size="15.5" fill="#4a4f54"><tspan font-weight="bold" fill="#111417">+6,29</tspan> km<tspan font-size="10.5" dy="-6.2">2</tspan></text>
<rect x="871.00" y="388.39" width="387.50" height="36.63" fill="#f8d7da" />
<rect x="871.00" y="424.02" width="387.50" height="1.00" fill="#d6b9bb" />
<text transform="translate(878.2,411.39) scale(0.811,1)" font-size="15.5" fill="#33383c">28.05.2025</text>
<text transform="translate(1016.4,411.39) scale(0.811,1)" font-size="15.5" fill="#33383c">71 065,39 <tspan fill="#4a4f54">km</tspan><tspan font-size="10.5" dy="-6.2" fill="#4a4f54">2</tspan></text>
<text transform="translate(1152.4,411.39) scale(0.835,1)" font-size="15.5" fill="#4a4f54"><tspan font-weight="bold" fill="#111417">-11,48</tspan> km<tspan font-size="10.5" dy="-6.2">2</tspan></text>
<rect x="871.00" y="425.02" width="387.50" height="36.63" fill="#c7dbd2" />
<rect x="871.00" y="460.65" width="387.50" height="1.00" fill="#b3c7bd" />
<text transform="translate(878.2,448.02) scale(0.811,1)" font-size="15.5" fill="#33383c">27.05.2025</text>
<text transform="translate(1016.4,448.02) scale(0.811,1)" font-size="15.5" fill="#33383c">71 076,87 <tspan fill="#4a4f54">km</tspan><tspan font-size="10.5" dy="-6.2" fill="#4a4f54">2</tspan></text>
<text transform="translate(1152.4,448.02) scale(0.835,1)" font-size="15.5" fill="#4a4f54"><tspan font-weight="bold" fill="#111417">+12,84</tspan> km<tspan font-size="10.5" dy="-6.2">2</tspan></text>
<rect x="871.00" y="461.65" width="387.50" height="36.63" fill="#d1e7dd" />
<rect x="871.00" y="497.28" width="387.50" height="1.00" fill="#b3c7bd" />
<text transform="translate(878.2,484.65) scale(0.811,1)" font-size="15.5" fill="#33383c">26.05.2025</text>
<text transform="translate(1016.4,484.65) scale(0.811,1)" font-size="15.5" fill="#33383c">71 064,03 <tspan fill="#4a4f54">km</tspan><tspan font-size="10.5" dy="-6.2" fill="#4a4f54">2</tspan></text>
<text transform="translate(1152.4,484.65) scale(0.835,1)" font-size="15.5" fill="#4a4f54"><tspan font-weight="bold" fill="#111417">+24,76</tspan> km<tspan font-size="10.5" dy="-6.2">2</tspan></text>
<rect x="871.00" y="498.28" width="387.50" height="36.63" fill="#c7dbd2" />
<rect x="871.00" y="533.91" width="387.50" height="1.00" fill="#b3c7bd" />
<text transform="translate(878.2,521.28) scale(0.811,1)" font-size="15.5" fill="#33383c">25.05.2025</text>
<text transform="translate(1016.4,521.28) scale(0.811,1)" font-size="15.5" fill="#33383c">71 039,27 <tspan fill="#4a4f54">km</tspan><tspan font-size="10.5" dy="-6.2" fill="#4a4f54">2</tspan></text>
<text transform="translate(1152.4,521.28) scale(0.835,1)" font-size="15.5" fill="#4a4f54"><tspan font-weight="bold" fill="#111417">+35,2</tspan> km<tspan font-size="10.5" dy="-6.2">2</tspan></text>
<rect x="871.00" y="534.91" width="387.50" height="36.63" fill="#d1e7dd" />
<rect x="871.00" y="570.54" width="387.50" height="1.00" fill="#b3c7bd" />
<text transform="translate(878.2,557.91) scale(0.811,1)" font-size="15.5" fill="#33383c">24.05.2025</text>
<text transform="translate(1016.4,557.91) scale(0.811,1)" font-size="15.5" fill="#33383c">71 004,07 <tspan fill="#4a4f54">km</tspan><tspan font-size="10.5" dy="-6.2" fill="#4a4f54">2</tspan></text>
<text transform="translate(1152.4,557.91) scale(0.835,1)" font-size="15.5" fill="#4a4f54"><tspan font-weight="bold" fill="#111417">+3,16</tspan> km<tspan font-size="10.5" dy="-6.2">2</tspan></text>
<rect x="871.00" y="571.54" width="387.50" height="36.63" fill="#eccccf" />
<rect x="871.00" y="607.17" width="387.50" height="1.00" fill="#d6b9bb" />
<text transform="translate(878.2,594.54) scale(0.811,1)" font-size="15.5" fill="#33383c">23.05.2025</text>
<text transform="translate(1016.4,594.54) scale(0.811,1)" font-size="15.5" fill="#33383c">71 000,91 <tspan fill="#4a4f54">km</tspan><tspan font-size="10.5" dy="-6.2" fill="#4a4f54">2</tspan></text>
<text transform="translate(1152.4,594.54) scale(0.835,1)" font-size="15.5" fill="#4a4f54"><tspan font-weight="bold" fill="#111417">-0,85</tspan> km<tspan font-size="10.5" dy="-6.2">2</tspan></text>
<rect x="871.00" y="608.17" width="387.50" height="36.63" fill="#d1e7dd" />
<rect x="871.00" y="643.80" width="387.50" height="1.00" fill="#b3c7bd" />
<text transform="translate(878.2,631.17) scale(0.811,1)" font-size="15.5" fill="#33383c">22.05.2025</text>
<text transform="translate(1016.4,631.17) scale(0.811,1)" font-size="15.5" fill="#33383c">71 001,77 <tspan fill="#4a4f54">km</tspan><tspan font-size="10.5" dy="-6.2" fill="#4a4f54">2</tspan></text>
<text transform="translate(1152.4,631.17) scale(0.835,1)" font-size="15.5" fill="#4a4f54"><tspan font-weight="bold" fill="#111417">+29,97</tspan> km<tspan font-size="10.5" dy="-6.2">2</tspan></text>
<rect x="871.00" y="644.80" width="387.50" height="36.63" fill="#c7dbd2" />
<rect x="871.00" y="680.43" width="387.50" height="1.00" fill="#b3c7bd" />
<text transform="translate(878.2,667.80) scale(0.811,1)" font-size="15.5" fill="#33383c">21.05.2025</text>
<text transform="translate(1016.4,667.80) scale(0.811,1)" font-size="15.5" fill="#33383c">70 971,8 <tspan fill="#4a4f54">km</tspan><tspan font-size="10.5" dy="-6.2" fill="#4a4f54">2</tspan></text>
<text transform="translate(1152.4,667.80) scale(0.835,1)" font-size="15.5" fill="#4a4f54"><tspan font-weight="bold" fill="#111417">+3,15</tspan> km<tspan font-size="10.5" dy="-6.2">2</tspan></text>
<rect x="871.00" y="681.43" width="387.50" height="36.63" fill="#d1e7dd" />
<rect x="871.00" y="717.06" width="387.50" height="1.00" fill="#b3c7bd" />
<text transform="translate(878.2,704.43) scale(0.811,1)" font-size="15.5" fill="#33383c">20.05.2025</text>
<text transform="translate(1016.4,704.43) scale(0.811,1)" font-size="15.5" fill="#33383c">70 968,65 <tspan fill="#4a4f54">km</tspan><tspan font-size="10.5" dy="-6.2" fill="#4a4f54">2</tspan></text>
<text transform="translate(1152.4,704.43) scale(0.835,1)" font-size="15.5" fill="#4a4f54"><tspan font-weight="bold" fill="#111417">+8,63</tspan> km<tspan font-size="10.5" dy="-6.2">2</tspan></text>
<rect x="871.00" y="718.06" width="387.50" height="36.63" fill="#c7dbd2" />
<rect x="871.00" y="753.69" width="387.50" height="1.00" fill="#b3c7bd" />
<text transform="translate(878.2,741.06) scale(0.811,1)" font-size="15.5" fill="#33383c">19.05.2025</text>
<text transform="translate(1016.4,741.06) scale(0.811,1)" font-size="15.5" fill="#33383c">70 960,02 <tspan fill="#4a4f54">km</tspan><tspan font-size="10.5" dy="-6.2" fill="#4a4f54">2</tspan></text>
<text transform="translate(1152.4,741.06) scale(0.835,1)" font-size="15.5" fill="#4a4f54"><tspan font-weight="bold" fill="#111417">+7,24</tspan> km<tspan font-size="10.5" dy="-6.2">2</tspan></text>
<rect x="871.00" y="754.69" width="387.50" height="36.63" fill="#d1e7dd" />
<rect x="871.00" y="790.32" width="387.50" height="1.00" fill="#b3c7bd" />
<text transform="translate(878.2,777.69) scale(0.811,1)" font-size="15.5" fill="#33383c">18.05.2025</text>
<text transform="translate(1016.4,777.69) scale(0.811,1)" font-size="15.5" fill="#33383c">70 952,77 <tspan fill="#4a4f54">km</tspan><tspan font-size="10.5" dy="-6.2" fill="#4a4f54">2</tspan></text>
<text transform="translate(1152.4,777.69) scale(0.835,1)" font-size="15.5" fill="#4a4f54"><tspan font-weight="bold" fill="#111417">+58,73</tspan> km<tspan font-size="10.5" dy="-6.2">2</tspan></text>
<rect x="871.00" y="791.32" width="387.50" height="36.63" fill="#c7dbd2" />
<rect x="871.00" y="826.95" width="387.50" height="1.00" fill="#b3c7bd" />
<text transform="translate(878.2,814.32) scale(0.811,1)" font-size="15.5" fill="#33383c">17.05.2025</text>
<text transform="translate(1016.4,814.32) scale(0.811,1)" font-size="15.5" fill="#33383c">70 894,05 <tspan fill="#4a4f54">km</tspan><tspan font-size="10.5" dy="-6.2" fill="#4a4f54">2</tspan></text>
<text transform="translate(1152.4,814.32) scale(0.835,1)" font-size="15.5" fill="#4a4f54"><tspan font-weight="bold" fill="#111417">+23,05</tspan> km<tspan font-size="10.5" dy="-6.2">2</tspan></text>
<rect x="871.00" y="827.95" width="387.50" height="36.63" fill="#d1e7dd" />
<rect x="871.00" y="863.58" width="387.50" height="1.00" fill="#b3c7bd" />
<text transform="translate(878.2,850.95) scale(0.811,1)" font-size="15.5" fill="#33383c">16.05.2025</text>
<text transform="translate(1016.4,850.95) scale(0.811,1)" font-size="15.5" fill="#33383c">70 871 <tspan fill="#4a4f54">km</tspan><tspan font-size="10.5" dy="-6.2" fill="#4a4f54">2</tspan></text>
<text transform="translate(1152.4,850.95) scale(0.835,1)" font-size="15.5" fill="#4a4f54"><tspan font-weight="bold" fill="#111417">+24,95</tspan> km<tspan font-size="10.5" dy="-6.2">2</tspan></text>
<rect x="871.00" y="864.58" width="387.50" height="36.63" fill="#c7dbd2" />
<rect x="871.00" y="900.21" width="387.50" height="1.00" fill="#b3c7bd" />
<text transform="translate(878.2,887.58) scale(0.811,1)" font-size="15.5" fill="#33383c">15.05.2025</text>
<text transform="translate(1016.4,887.58) scale(0.811,1)" font-size="15.5" fill="#33383c">70 846,05 <tspan fill="#4a4f54">km</tspan><tspan font-size="10.5" dy="-6.2" fill="#4a4f54">2</tspan></text>
<text transform="translate(1152.4,887.58) scale(0.835,1)" font-size="15.5" fill="#4a4f54"><tspan font-weight="bold" fill="#111417">+23,37</tspan> km<tspan font-size="10.5" dy="-6.2">2</tspan></text>
<rect x="871.00" y="901.21" width="387.50" height="36.63" fill="#d1e7dd" />
<rect x="871.00" y="936.84" width="387.50" height="1.00" fill="#b3c7bd" />
<text transform="translate(878.2,924.21) scale(0.811,1)" font-size="15.5" fill="#33383c">14.05.2025</text>
<text transform="translate(1016.4,924.21) scale(0.811,1)" font-size="15.5" fill="#33383c">70 822,68 <tspan fill="#4a4f54">km</tspan><tspan font-size="10.5" dy="-6.2" fill="#4a4f54">2</tspan></text>
<text transform="translate(1152.4,924.21) scale(0.835,1)" font-size="15.5" fill="#4a4f54"><tspan font-weight="bold" fill="#111417">+37,25</tspan> km<tspan font-size="10.5" dy="-6.2">2</tspan></text>
<rect x="871.00" y="937.84" width="387.50" height="36.63" fill="#c7dbd2" />
<rect x="871.00" y="973.47" width="387.50" height="1.00" fill="#b3c7bd" />
<text transform="translate(878.2,960.84) scale(0.811,1)" font-size="15.5" fill="#33383c">13.05.2025</text>
<text transform="translate(1016.4,960.84) scale(0.811,1)" font-size="15.5" fill="#33383c">70 785,43 <tspan fill="#4a4f54">km</tspan><tspan font-size="10.5" dy="-6.2" fill="#4a4f54">2</tspan></text>
<text transform="translate(1152.4,960.84) scale(0.835,1)" font-size="15.5" fill="#4a4f54"><tspan font-weight="bold" fill="#111417">+41,91</tspan> km<tspan font-size="10.5" dy="-6.2">2</tspan></text>
<rect x="871.00" y="974.47" width="387.50" height="36.63" fill="#d1e7dd" />
<rect x="871.00" y="1010.10" width="387.50" height="1.00" fill="#b3c7bd" />
<text transform="translate(878.2,997.47) scale(0.811,1)" font-size="15.5" fill="#33383c">12.05.2025</text>
<text transform="translate(1016.4,997.47) scale(0.811,1)" font-size="15.5" fill="#33383c">70 743,52 <tspan fill="#4a4f54">km</tspan><tspan font-size="10.5" dy="-6.2" fill="#4a4f54">2</tspan></text>
<text transform="translate(1152.4,997.47) scale(0.835,1)" font-size="15.5" fill="#4a4f54"><tspan font-weight="bold" fill="#111417">+17,06</tspan> km<tspan font-size="10.5" dy="-6.2">2</tspan></text>
<rect x="871.00" y="1011.10" width="387.50" height="36.63" fill="#c7dbd2" />
<rect x="871.00" y="1046.73" width="387.50" height="1.00" fill="#b3c7bd" />
<text transform="translate(878.2,1034.10) scale(0.811,1)" font-size="15.5" fill="#33383c">11.05.2025</text>
<text transform="translate(1016.4,1034.10) scale(0.811,1)" font-size="15.5" fill="#33383c">70 726,46 <tspan fill="#4a4f54">km</tspan><tspan font-size="10.5" dy="-6.2" fill="#4a4f54">2</tspan></text>
<text transform="translate(1152.4,1034.10) scale(0.835,1)" font-size="15.5" fill="#4a4f54"><tspan font-weight="bold" fill="#111417">+23,18</tspan> km<tspan font-size="10.5" dy="-6.2">2</tspan></text>
</g>
<rect x="1258.50" y="242.00" width="19.50" height="784.00" fill="#f1f1f1" />
<path d="M1264.2,255.9 L1268.2,251.8 L1272.2,255.9 Z" fill="#a3a3a3"/>
<rect x="1260.20" y="262.60" width="15.60" height="492.00" fill="#c1c1c1" />
<path d="M1264.0,1013.6 L1272.2,1013.6 L1268.1,1017.8 Z" fill="#505050"/>
</svg>
</body></html>
